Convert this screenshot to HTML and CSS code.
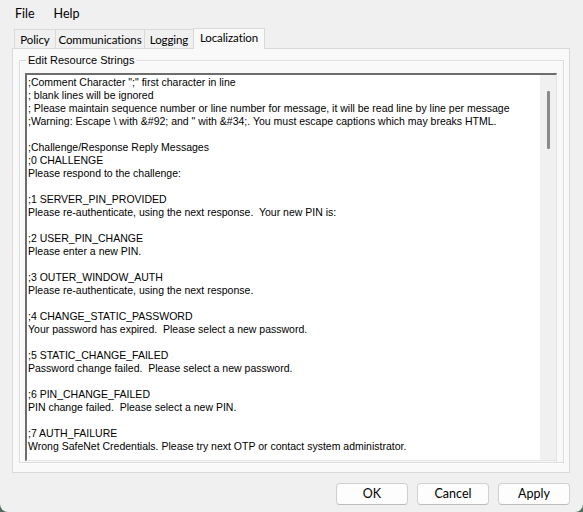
FILE: index.html
```html
<!DOCTYPE html>
<html>
<head>
<meta charset="utf-8">
<link rel="stylesheet" href="styles.css">
</head>
<body>
<div class="window">
  <div class="menubar">
    <span class="menu-item">File</span>
    <span class="menu-item">Help</span>
  </div>
  <div class="tabstrip">
    <div class="tab tab-policy">Policy</div>
    <div class="tab tab-comm">Communications</div>
    <div class="tab tab-log">Logging</div>
    <div class="tab tab-loc selected">Localization</div>
  </div>
  <div class="panel">
    <fieldset class="group">
      <legend class="group-label">Edit Resource Strings</legend>
      <div class="editbox">
        <div class="edit-text">;Comment Character ";" first character in line
; blank lines will be ignored
; Please maintain sequence number or line number for message, it will be read line by line per message
;Warning: Escape \ with &amp;#92; and " with &amp;#34;. You must escape captions which may breaks HTML.

;Challenge/Response Reply Messages
;0 CHALLENGE
Please respond to the challenge:

;1 SERVER_PIN_PROVIDED
Please re-authenticate, using the next response.  Your new PIN is:

;2 USER_PIN_CHANGE
Please enter a new PIN.

;3 OUTER_WINDOW_AUTH
Please re-authenticate, using the next response.

;4 CHANGE_STATIC_PASSWORD
Your password has expired.  Please select a new password.

;5 STATIC_CHANGE_FAILED
Password change failed.  Please select a new password.

;6 PIN_CHANGE_FAILED
PIN change failed.  Please select a new PIN.

;7 AUTH_FAILURE
Wrong SafeNet Credentials. Please try next OTP or contact system administrator.</div>
        <div class="vscroll"><div class="thumb"></div></div>
      </div>
    </fieldset>
  </div>
  <div class="buttons">
    <button class="btn">OK</button>
    <button class="btn">Cancel</button>
    <button class="btn">Apply</button>
  </div>
</div>
</body>
</html>
```

FILE: styles.css
```css
html {
  background: #4f6e5c;
}
body {
  margin: 0;
}
.window {
  width: 583px;
  height: 512px;
  box-sizing: border-box;
  background: #f0f0f0;
  border-radius: 0 0 8px 8px;
  overflow: hidden;
  font-family: Lato, "Noto Sans", sans-serif;
  color: #000;
}
.menubar {
  height: 28px;
  display: flex;
  align-items: flex-start;
  padding-left: 15px;
  box-sizing: border-box;
}
.menu-item {
  font-size: 12.5px;
  line-height: 14px;
  margin-top: 7px;
  margin-right: 19px;
}
.tabstrip {
  height: 20px;
  display: flex;
  align-items: flex-end;
  padding-left: 14px;
  position: relative;
  z-index: 1;
}
.tab {
  height: 19px;
  box-sizing: border-box;
  border: 1px solid #d9d9d9;
  border-bottom: none;
  border-right: none;
  background: #f0f0f0;
  font-size: 11.5px;
  letter-spacing: -0.1px;
  line-height: 19px;
  text-align: center;
  white-space: nowrap;
}
.tab-policy { width: 41px; }
.tab-comm { width: 89px; }
.tab-log { width: 49px; }
.tab-loc {
  width: 72px;
  border-right: 1px solid #d9d9d9;
}
.tab.selected {
  height: 21px;
  background: #f9f9f9;
  line-height: 18px;
  margin-bottom: -1px;
}
.panel {
  margin-left: 12px;
  width: 558px;
  height: 425px;
  box-sizing: border-box;
  border: 1px solid #d9d9d9;
  background: #f9f9f9;
  padding-top: 5px;
}
.group {
  margin: 0 5px 0 6px;
  padding: 0;
  height: 409px;
  box-sizing: border-box;
  border: 1px solid #dcdcdc;
  box-shadow: inset 1px 1px #fff, 1px 1px #fff;
  display: flex;
  flex-direction: column;
  min-width: 0;
}
.group-label {
  margin-left: 6px;
  padding: 0 2px;
  font-family: "Liberation Sans", Arial, sans-serif;
  font-size: 11px;
  line-height: 13px;
}
.editbox {
  margin: 6px 6px 1px 5px;
  height: 388px;
  box-sizing: border-box;
  background: #fff;
  border-style: solid;
  border-width: 2px 1px 1px 2px;
  border-color: #6d6d6d #e3e3e3 #e3e3e3 #6d6d6d;
  display: flex;
  overflow: hidden;
}
.edit-text {
  flex: 1;
  white-space: pre;
  overflow: hidden;
  font-family: "Liberation Sans", Arial, sans-serif;
  font-size: 10.5px;
  line-height: 13px;
  padding: 1px 0 0 1px;
}
.vscroll {
  width: 16px;
  background: #f0f0f0;
  display: flex;
  justify-content: center;
  padding-top: 16px;
  box-sizing: border-box;
}
.thumb {
  width: 3px;
  height: 58px;
  background: #8a8a8a;
  border-radius: 1px;
  margin-left: 1px;
}
.buttons {
  display: flex;
  justify-content: flex-end;
  gap: 9px;
  padding-right: 13px;
  margin-top: 10px;
}
.btn {
  width: 72px;
  height: 22px;
  box-sizing: border-box;
  background: #fdfdfd;
  border: 1px solid #d0d0d0;
  border-bottom-color: #bcbcbc;
  border-radius: 4px;
  font-family: Lato, "Noto Sans", sans-serif;
  font-size: 12.5px;
  line-height: 18px;
  padding: 0;
  color: #000;
}
```
